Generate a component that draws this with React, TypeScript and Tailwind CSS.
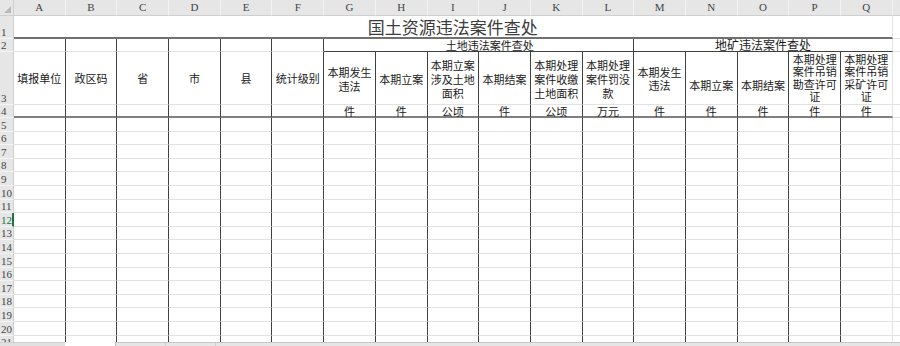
import React from 'react';

// --- Données de la feuille ---
const letters = 'ABCDEFGHIJKLMNOPQ'.split('');

const headers = [
  '填报单位', '政区码', '省', '市', '县', '统计级别',
  '本期发生违法', '本期立案', '本期立案涉及土地面积', '本期结案', '本期处理案件收缴土地面积', '本期处理案件罚没款',
  '本期发生违法', '本期立案', '本期结案', '本期处理案件吊销勘查许可证', '本期处理案件吊销采矿许可证',
];

const units = ['', '', '', '', '', '', '件', '件', '公顷', '件', '公顷', '万元', '件', '件', '件', '件', '件'];

const dataRows = Array.from({ length: 17 }, (_, i) => i + 5);

const cjk = "font-['Noto_Sans_CJK_SC',sans-serif]";
const serif = "font-['Liberation_Serif',serif]";

// bordure droite : foncée partout sauf après Q
const rightBorder = (c: number) => (c === 16 ? 'border-r border-r-[#e2e2e2]' : 'border-r border-r-[#404040]');

// décalage vertical propre à certains intitulés
const headerPad = (i: number) => {
  if (i === 13 || i === 14) return 'pt-[14px] leading-[13px]';
  if (i === 15 || i === 16) return 'pb-[1px] leading-[12.5px]';
  if (i >= 12) return 'pt-[2px] leading-[13px]';
  if (i >= 6) return 'pt-[2px] leading-[14px]';
  return 'leading-[14px]';
};

const RowNum: React.FC<{ n: number; h: string; active?: boolean }> = ({ n, h, active }) => (
  <div
    className={`${h} ${serif} bg-[#e6e6e6] border-b border-b-[#f4f4f4] flex items-end pl-[1px] text-[11px] leading-[12px] overflow-hidden ${
      active ? 'text-[#217346] border-r-2 border-r-[#217346]' : 'text-[#444] border-r border-r-[#cfcfcf]'
    }`}
  >
    {n}
  </div>
);

const App: React.FC = () => {
  return (
    <div className="w-[900px] h-[346px] overflow-hidden bg-white flex flex-col">
      <div className="flex-1 min-h-0 overflow-hidden">
        <div className="grid grid-cols-[14px_repeat(17,51.7px)_1fr]">
          {/* --- en-têtes de colonnes --- */}
          <div className="h-[16px] bg-[#e6e6e6] border-b border-b-[#cfcfcf] border-r border-r-[#cfcfcf] flex items-end justify-end p-[2px]">
            <div className="w-0 h-0 border-l-[7px] border-l-transparent border-b-[7px] border-b-[#b9b9b9]" />
          </div>
          {letters.map((l) => (
            <div
              key={l}
              className={`h-[16px] bg-[#e6e6e6] border-b border-b-[#cfcfcf] border-r border-r-[#f2f2f2] flex items-center justify-center text-[11px] text-[#444] ${serif}`}
            >
              {l}
            </div>
          ))}
          <div className="h-[16px] bg-[#e6e6e6] border-b border-b-[#cfcfcf]" />

          {/* --- ligne 1 : titre --- */}
          <RowNum n={1} h="h-[23px]" />
          <div className={`col-span-17 h-[23px] border-b-2 border-b-[#707070] border-r border-r-[#e2e2e2] flex items-center justify-center pt-[1px] text-[17px] leading-[16px] text-[#3c3c3c] ${cjk}`}>
            国土资源违法案件查处
          </div>
          <div className="h-[23px] border-b border-b-[#e2e2e2]" />

          {/* --- ligne 2 : groupes --- */}
          <RowNum n={2} h="h-[13px]" />
          {letters.slice(0, 6).map((l, i) => (
            <div key={l} className={`h-[13px] border-b border-b-[#e2e2e2] ${rightBorder(i)}`} />
          ))}
          <div className={`col-span-6 h-[13px] border-b border-b-[#404040] border-r border-r-[#404040] flex items-center justify-center pl-[22px] text-[11px] leading-[12px] text-[#1a1a1a] ${cjk}`}>
            土地违法案件查处
          </div>
          <div className={`col-span-5 h-[13px] border-b border-b-[#404040] border-r border-r-[#e2e2e2] flex items-center justify-center text-[12px] leading-[12px] text-[#1a1a1a] ${cjk}`}>
            地矿违法案件查处
          </div>
          <div className="h-[13px] border-b border-b-[#e2e2e2]" />

          {/* --- ligne 3 : intitulés --- */}
          <RowNum n={3} h="h-[53px]" />
          {headers.map((t, i) => (
            <div
              key={i}
              className={`h-[53px] border-b border-b-[#e2e2e2] ${rightBorder(i)} flex items-center justify-center px-[2px] text-center text-[11px] text-[#1a1a1a] ${cjk} ${headerPad(i)}`}
            >
              {t}
            </div>
          ))}
          <div className="h-[53px] border-b border-b-[#e2e2e2]" />

          {/* --- ligne 4 : unités --- */}
          <RowNum n={4} h="h-[13px]" />
          {units.map((u, i) => (
            <div
              key={i}
              className={`h-[13px] border-b-2 border-b-[#808080] ${rightBorder(i)} flex items-center justify-center text-[11px] leading-[12px] text-[#1a1a1a] ${cjk}`}
            >
              {u}
            </div>
          ))}
          <div className="h-[13px] border-b border-b-[#e2e2e2]" />

          {/* --- lignes de données vides --- */}
          {dataRows.map((r) => (
            <React.Fragment key={r}>
              <RowNum n={r} h="h-[13.6px]" active={r === 12} />
              {letters.map((l, i) => (
                <div key={l} className={`h-[13.6px] border-b border-b-[#e2e2e2] ${rightBorder(i)}`} />
              ))}
              <div className="h-[13.6px] border-b border-b-[#e2e2e2]" />
            </React.Fragment>
          ))}
        </div>
      </div>

      {/* --- barre du bas (onglets / défilement) --- */}
      <div className="h-[4px] flex">
        <div className="w-[65px] bg-[#e1e1e1] border-t border-t-[#cfcfcf]" />
        <div className="w-[50px] bg-white" />
        <div className="flex-1 bg-[#e6e6e6] border-t border-t-[#c8c8c8] border-l border-l-[#bdbdbd] flex">
          <div className="w-[50px] border-r border-r-[#cfcfcf]" />
          <div className="w-[50px] border-r border-r-[#cfcfcf]" />
        </div>
      </div>
    </div>
  );
};

export default App;
